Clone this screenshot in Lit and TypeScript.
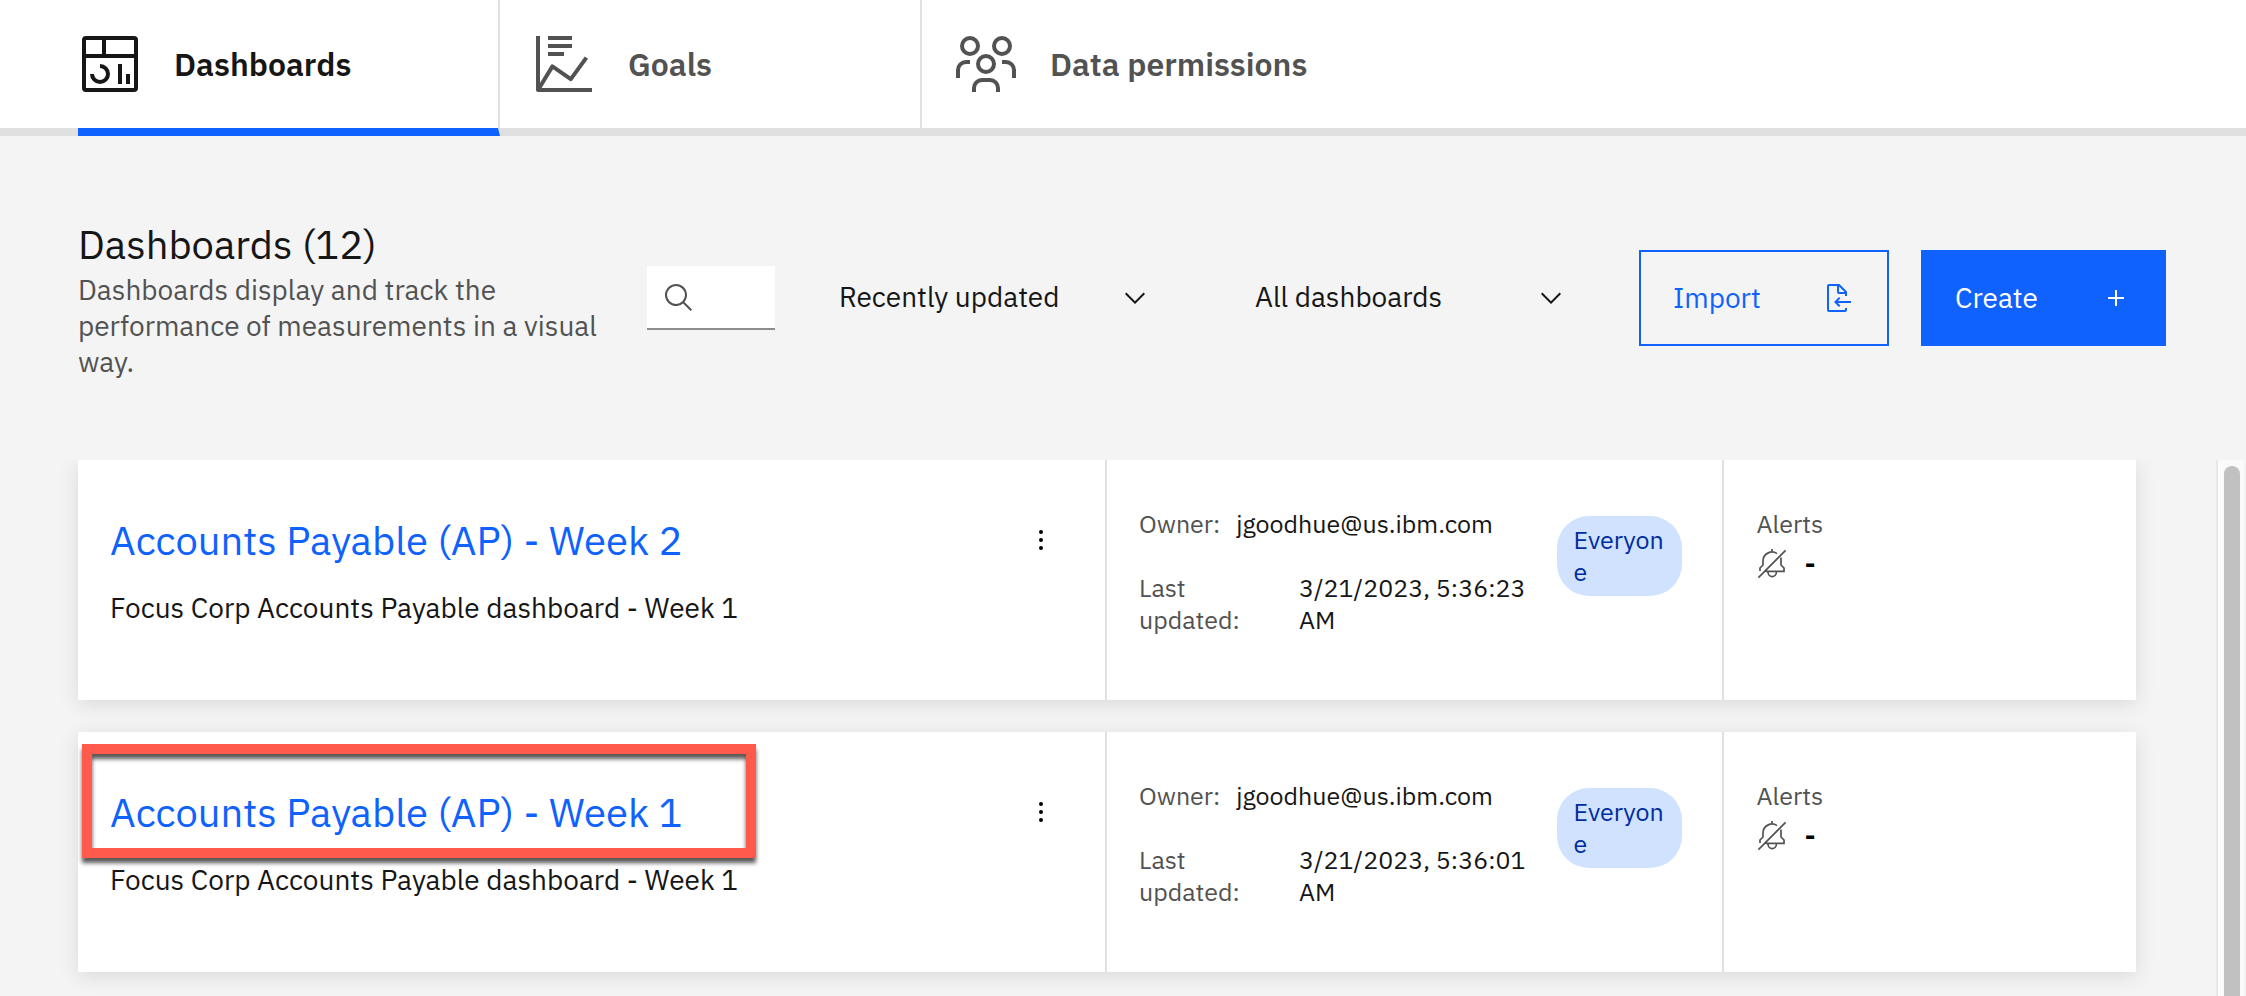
import { LitElement, html, css, svg, nothing } from "lit";
import { customElement, property } from "lit/decorators.js";

interface Dashboard {
  title: string;
  description: string;
  owner: string;
  updated: string;
  highlighted?: boolean;
}

const dashboards: Dashboard[] = [
  {
    title: "Accounts Payable (AP) - Week 2",
    description: "Focus Corp Accounts Payable dashboard - Week 1",
    owner: "jgoodhue@us.ibm.com",
    updated: "3/21/2023, 5:36:23 AM",
  },
  {
    title: "Accounts Payable (AP) - Week 1",
    description: "Focus Corp Accounts Payable dashboard - Week 1",
    owner: "jgoodhue@us.ibm.com",
    updated: "3/21/2023, 5:36:01 AM",
    highlighted: true,
  },
];

const icons = {
  dashboard: svg`<g fill="none" stroke="currentColor" stroke-width="2">
    <rect x="3" y="3" width="26" height="26" rx="1"/>
    <path d="M3 12H29M13 3V12M11 17A4 4 0 1 1 7 21M21 16V26M25 21V26"/></g>`,
  goals: svg`<g fill="none" stroke="currentColor" stroke-width="2" stroke-linejoin="round">
    <path d="M3 2V29H30M8 3H20M8 7H20M8 11H16"/>
    <path d="M3.4 28.4L10.2 17.2L19.4 23.6L27.2 12.8"/></g>`,
  group: svg`<g fill="none" stroke="currentColor" stroke-width="2">
    <circle cx="8" cy="7" r="4"/><circle cx="24" cy="7" r="4"/><circle cx="16" cy="16" r="4"/>
    <path d="M2 23V19A4 4 0 0 1 6 15H8M30 23V19A4 4 0 0 0 26 15H24M10 30V28A4 4 0 0 1 14 24H18A4 4 0 0 1 22 28V30"/></g>`,
  search: svg`<path fill="currentColor" d="M29 27.586l-7.552-7.552a11.018 11.018 0 1 0-1.414 1.414L27.586 29ZM4 13a9 9 0 1 1 9 9A9.01 9.01 0 0 1 4 13Z"/>`,
  chevron: svg`<path fill="currentColor" d="M16 22L6 12L7.4 10.6L16 19.2L24.6 10.6L26 12Z"/>`,
  importDoc: svg`<path fill="currentColor" d="M28 19H14.83l2.58-2.59L16 15l-5 5 5 5 1.41-1.41L14.83 21H28Z"/>
    <path fill="currentColor" d="M24 14V10a1 1 0 0 0-.29-.71l-7-7A1 1 0 0 0 16 2H6A2 2 0 0 0 4 4V28a2 2 0 0 0 2 2H22a2 2 0 0 0 2-2V26H22v2H6V4h8v6a2 2 0 0 0 2 2h6v2Zm-8-4V4.41L21.59 10Z"/>`,
  add: svg`<path fill="currentColor" d="M17 15V8H15V15H8V17H15V24H17V17H24V15Z"/>`,
  overflow: svg`<circle cx="16" cy="8" r="2"/><circle cx="16" cy="16" r="2"/><circle cx="16" cy="24" r="2"/>`,
  bellOff: svg`<path fill="none" stroke="currentColor" stroke-width="1.7"
    d="M2.4 29.6L29.6 2.4M16 1V4M4 23V20L7 17V13A9 9 0 0 1 21 5.6M25 9.6V17L28 20V23.4H10M12 24A4.2 4.6 0 0 0 20.4 24"/>`,
};

const icon = (shape: unknown, size = 32) =>
  html`<svg viewBox="0 0 32 32" width=${size} height=${size} aria-hidden="true">${shape}</svg>`;

@customElement("dashboard-card")
export class DashboardCard extends LitElement {
  @property({ attribute: false }) data!: Dashboard;

  static styles = css`
    :host {
      display: grid;
      grid-template-columns: 5fr 3fr 2fr;
      position: relative;
      min-height: 240px;
      background: #fff;
      box-shadow: 0 4px 20px rgba(0, 0, 0, 0.11);
      font-size: 25px;
      line-height: 32px;
      color: #161616;
    }
    svg { display: block; flex: none; }
    .cell { box-sizing: border-box; min-width: 0; padding: 48px 32px; }
    .main, .details { border-right: 2px solid #e0e0e0; }
    .main { display: flex; justify-content: space-between; align-items: flex-start; }
    h2 { margin: 0 0 16px; font-size: 40px; line-height: 64px; font-weight: 400; }
    a { color: #0f62fe; text-decoration: none; }
    .description { margin: 0; font-size: 28px; line-height: 40px; }
    .menu {
      display: flex; align-items: center; justify-content: center;
      width: 64px; height: 64px; padding: 0; border: 0; background: none; color: #161616;
    }
    .details { display: flex; align-items: flex-start; gap: 16px; padding-right: 40px; }
    dl { flex: 1; min-width: 0; margin: 0; display: flex; flex-direction: column; gap: 32px; }
    .row { display: flex; gap: 16px; }
    dt, .label { color: #525252; }
    dd { margin: 0; }
    .updated dt { flex: 0 0 144px; }
    .tag {
      box-sizing: border-box; flex: 0 0 125px; margin-top: 8px; padding: 8px 16px;
      border-radius: 32px; background: #d0e2ff; color: #002d9c; word-break: break-all;
    }
    .alerts { display: flex; align-items: center; gap: 16px; margin-top: 8px; color: #525252; }
    .none { font-size: 28px; font-weight: 600; color: #000; }
    .highlight {
      position: absolute; top: 12px; left: 4px; width: 654px; height: 94px;
      border: 10px solid #ff5a4c; pointer-events: none;
      filter: drop-shadow(0 5px 2px rgba(0, 0, 0, 0.65));
    }
  `;

  render() {
    const d = this.data;
    return html`
      <div class="cell main">
        <div>
          <h2><a href="#">${d.title}</a></h2>
          <p class="description">${d.description}</p>
        </div>
        <button class="menu" aria-label="Options">${icon(icons.overflow)}</button>
      </div>
      <div class="cell details">
        <dl>
          <div class="row"><dt>Owner:</dt><dd>${d.owner}</dd></div>
          <div class="row updated"><dt>Last updated:</dt><dd>${d.updated}</dd></div>
        </dl>
        <span class="tag">Everyone</span>
      </div>
      <div class="cell">
        <div class="label">Alerts</div>
        <div class="alerts">${icon(icons.bellOff)}<span class="none">-</span></div>
      </div>
      ${d.highlighted ? html`<div class="highlight"></div>` : nothing}
    `;
  }
}

@customElement("app-root")
export class AppRoot extends LitElement {
  static styles = css`
    :host {
      display: flex;
      flex-direction: column;
      height: 100vh;
      overflow: hidden;
      background: #f4f4f4;
      color: #161616;
      font-family: "IBM Plex Sans", Roboto, "Liberation Sans", sans-serif;
      font-size: 28px;
      line-height: 36px;
    }
    svg { display: block; flex: none; }
    nav { flex: none; display: flex; background: #fff; }
    nav::before { content: ""; flex: 0 0 78px; border-bottom: 8px solid #e0e0e0; }
    .tab {
      box-sizing: border-box; display: flex; align-items: center; gap: 32px;
      flex: 0 0 422px; height: 136px; padding-left: 32px;
      border-right: 2px solid #e0e0e0; border-bottom: 8px solid #e0e0e0;
      color: #525252; font-size: 32px; font-weight: 600; text-decoration: none; white-space: nowrap;
    }
    .tab.active { padding-left: 0; color: #161616; border-bottom-color: #0f62fe; }
    .tab.last { flex: 1; border-right: 0; }
    .toolbar { flex: none; display: flex; align-items: center; gap: 32px; padding: 80px 80px 80px 78px; }
    .intro { flex: 1; min-width: 0; }
    h1 { margin: 0; font-size: 40px; line-height: 56px; font-weight: 400; }
    .intro p { margin: 0; color: #525252; }
    .search { position: relative; flex: 0 0 128px; color: #525252; }
    .search svg { position: absolute; left: 16px; top: 16px; pointer-events: none; }
    input {
      box-sizing: border-box; display: block; width: 100%; height: 64px; padding: 0 16px 0 64px;
      border: 0; border-bottom: 2px solid #8d8d8d; border-radius: 0; background: #fff; font: inherit;
      appearance: none;
    }
    .filters { flex: none; display: flex; gap: 40px; padding-right: 8px; }
    .filter { position: relative; width: 376px; }
    .filter svg { position: absolute; right: 32px; top: 16px; pointer-events: none; }
    select {
      appearance: none; box-sizing: border-box; display: block; width: 100%; height: 64px;
      padding: 0 80px 0 32px; border: 0; border-bottom: 2px solid transparent; border-radius: 0;
      background: none; color: inherit; font: inherit;
    }
    .button {
      box-sizing: border-box; display: flex; align-items: center; justify-content: space-between;
      flex: none; width: 250px; height: 96px; padding: 0 32px; border: 2px solid #0f62fe;
      background: none; color: #0f62fe; font: inherit;
    }
    .button.primary { width: 245px; background: #0f62fe; color: #fff; }
    .content { flex: 1; min-height: 0; display: flex; overflow: hidden; }
    .cards { flex: 1; min-width: 0; display: flex; flex-direction: column; gap: 32px; padding: 0 80px 0 78px; }
    dashboard-card { flex: none; }
    .track {
      box-sizing: border-box; flex: 0 0 28px; margin-right: 2px; padding: 6px 4px 0 6px;
      border-left: 2px solid #e8e8e8; background: #fafafa;
    }
    .thumb { height: 120%; border-radius: 8px; background: #c1c1c1; }
  `;

  render() {
    return html`
      <nav aria-label="Sections">
        <a class="tab active" href="#" aria-current="page">${icon(icons.dashboard, 64)}Dashboards</a>
        <a class="tab" href="#">${icon(icons.goals, 64)}Goals</a>
        <a class="tab last" href="#">${icon(icons.group, 64)}Data permissions</a>
      </nav>
      <section class="toolbar">
        <div class="intro">
          <h1>Dashboards (12)</h1>
          <p>Dashboards display and track the performance of measurements in a visual way.</p>
        </div>
        <div class="search">
          <input type="search" aria-label="Search dashboards" />
          ${icon(icons.search)}
        </div>
        <div class="filters">
          <div class="filter">
            <select aria-label="Sort by"><option>Recently updated</option></select>
            ${icon(icons.chevron)}
          </div>
          <div class="filter">
            <select aria-label="Filter"><option>All dashboards</option></select>
            ${icon(icons.chevron)}
          </div>
        </div>
        <button class="button">Import ${icon(icons.importDoc)}</button>
        <button class="button primary">Create ${icon(icons.add)}</button>
      </section>
      <main class="content">
        <div class="cards">
          ${dashboards.map((d) => html`<dashboard-card .data=${d}></dashboard-card>`)}
        </div>
        <div class="track"><div class="thumb"></div></div>
      </main>
    `;
  }
}
